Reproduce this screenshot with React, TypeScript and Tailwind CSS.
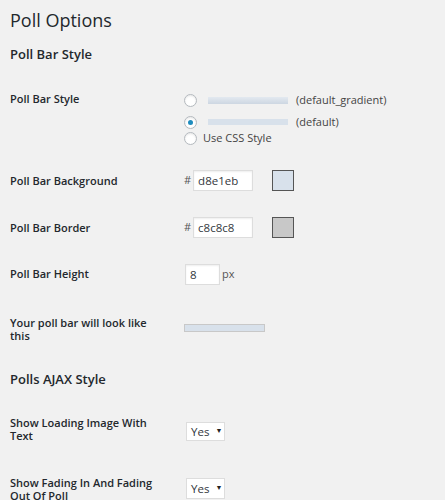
import React from "react";

const Radio = ({ checked }: { checked?: boolean }) => (
  <span className="relative inline-flex h-[13px] w-[13px] shrink-0 items-center justify-center rounded-full border border-[#b4b9be] bg-white shadow-[inset_0_1px_2px_rgba(0,0,0,0.1)]">
    {checked && <span className="h-[5px] w-[5px] rounded-full bg-[#1e8cbe]" />}
  </span>
);

const Label = ({ children, pt }: { children: React.ReactNode; pt: string }) => (
  <div className={`w-[174px] shrink-0 pr-[18px] text-[11px] leading-[13px] font-semibold text-[#23282d] ${pt}`}>
    {children}
  </div>
);

export default function App() {
  return (
    <div
      className="min-h-[500px] w-[445px] overflow-hidden bg-[#f1f1f1] pl-[10px] text-[#23282d]"
      style={{ fontFamily: '"Open Sans", "Liberation Sans", sans-serif' }}
    >
      <h1 className="pt-[6px] text-[18px] leading-[28px] font-normal">Poll Options</h1>
      <h2 className="mt-[11px] text-[13px] leading-[18px] font-semibold">Poll Bar Style</h2>

      {/* Row 1 */}
      <div className="mt-[29px] flex items-start">
        <Label pt="pt-0">Poll Bar Style</Label>
        <div className="flex flex-col pt-[1px] text-[11px] text-[#444]">
          <div className="flex h-[14px] items-center">
            <Radio />
            <span className="ml-[11px] h-[7px] w-[80px] bg-gradient-to-b from-[#e3e9f0] to-[#cdd7e2]" />
            <span className="ml-[8px] leading-[14px]">(default_gradient)</span>
          </div>
          <div className="mt-[8px] flex h-[14px] items-center">
            <Radio checked />
            <span className="ml-[11px] h-[6px] w-[80px] bg-[#d8e1eb]" />
            <span className="ml-[8px] leading-[14px]">(default)</span>
          </div>
          <div className="mt-[2px] flex h-[14px] items-center">
            <Radio />
            <span className="ml-[6px] leading-[14px]">Use CSS Style</span>
          </div>
        </div>
      </div>

      {/* Row 2 */}
      <div className="mt-[25px] flex items-start">
        <Label pt="pt-[4px]">Poll Bar Background</Label>
        <div className="flex items-center">
          <span className="text-[11px] text-[#555]">#</span>
          <div className="ml-[2px] flex h-[21px] w-[60px] items-center border border-[#ddd] bg-white pl-[4px] text-[11.5px] text-[#32373c] shadow-[inset_0_1px_2px_rgba(0,0,0,0.07)]">
            d8e1eb
          </div>
          <span className="ml-[19px] h-[21px] w-[22px] border border-[#555] bg-[#d8e1eb]" />
        </div>
      </div>

      {/* Row 3 */}
      <div className="mt-[26px] flex items-start">
        <Label pt="pt-[4px]">Poll Bar Border</Label>
        <div className="flex items-center">
          <span className="text-[11px] text-[#555]">#</span>
          <div className="ml-[2px] flex h-[21px] w-[60px] items-center border border-[#ddd] bg-white pl-[4px] text-[11.5px] text-[#32373c] shadow-[inset_0_1px_2px_rgba(0,0,0,0.07)]">
            c8c8c8
          </div>
          <span className="ml-[19px] h-[21px] w-[22px] border border-[#555] bg-[#c8c8c8]" />
        </div>
      </div>

      {/* Row 4 */}
      <div className="mt-[26px] flex items-start">
        <Label pt="pt-[3px]">Poll Bar Height</Label>
        <div className="flex items-center">
          <div className="ml-[1px] flex h-[21px] w-[35px] items-center border border-[#ddd] bg-white pl-[4px] text-[11.5px] text-[#32373c] shadow-[inset_0_1px_2px_rgba(0,0,0,0.07)]">
            8
          </div>
          <span className="ml-[2px] text-[11px] text-[#555]">px</span>
        </div>
      </div>

      {/* Row 5 */}
      <div className="mt-[31px] flex items-start">
        <Label pt="pt-0">Your poll bar will look like this</Label>
        <div className="pt-[8px]">
          <div className="h-[8px] w-[81px] border border-[#c8c8c8] bg-[#d8e1eb]" />
        </div>
      </div>

      <h2 className="mt-[28px] text-[13px] leading-[18px] font-semibold">Polls AJAX Style</h2>

      {/* Row 6 */}
      <div className="mt-[28px] flex items-start">
        <Label pt="pt-0">Show Loading Image With Text</Label>
        <div className="pt-[6px]">
          <div className="ml-[2px] flex h-[19px] w-[39px] items-center border border-[#ddd] bg-white pl-[4px] text-[11.5px] text-[#32373c]">
            Yes
            <span className="ml-[6px] text-[7px] text-[#222]">▼</span>
          </div>
        </div>
      </div>

      {/* Row 7 */}
      <div className="mt-[34px] flex items-start">
        <Label pt="pt-0">Show Fading In And Fading Out Of Poll</Label>
        <div className="pt-[2px]">
          <div className="ml-[2px] flex h-[21px] w-[39px] items-center border border-[#ddd] bg-white pl-[4px] text-[11.5px] text-[#32373c]">
            Yes
            <span className="ml-[6px] text-[7px] text-[#222]">▼</span>
          </div>
        </div>
      </div>
    </div>
  );
}
